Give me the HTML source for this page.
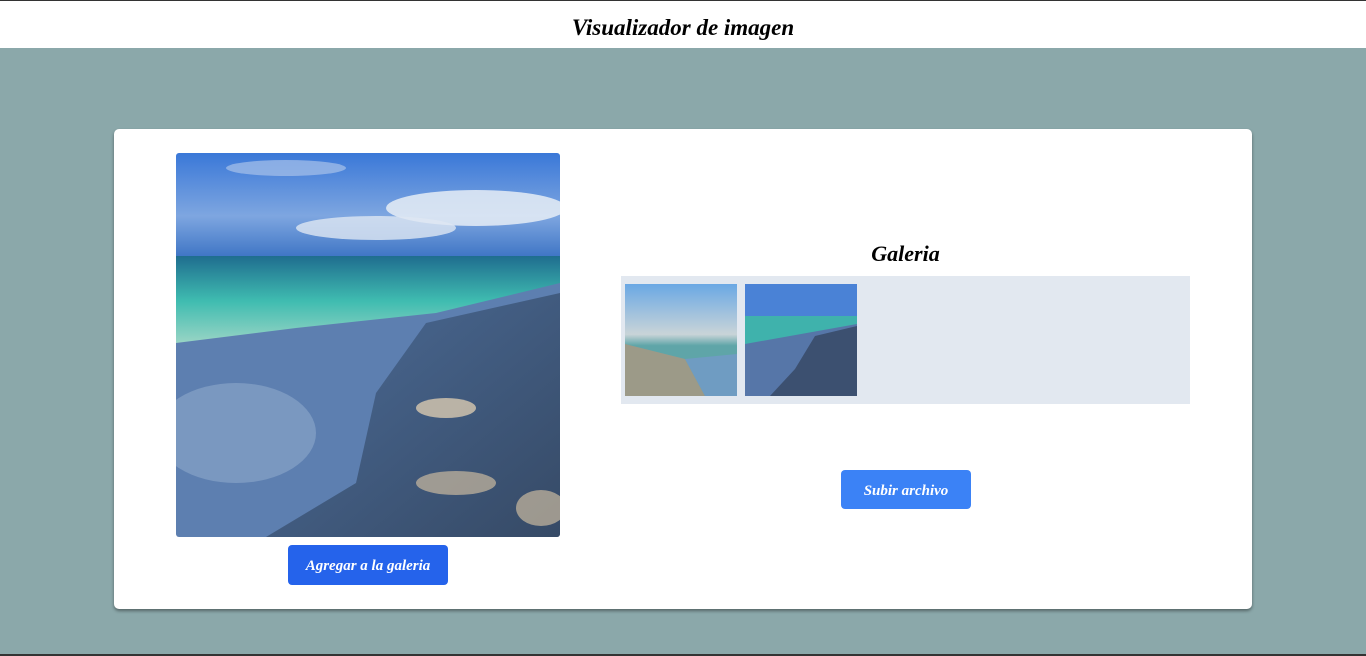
<!DOCTYPE html>
<html><head><meta charset="utf-8"><style>
*{margin:0;padding:0;box-sizing:border-box}
body{width:1366px;height:656px;background:#8ba8aa;font-family:"Liberation Serif",serif;position:relative;overflow:hidden;border-top:1px solid #333;border-bottom:2px solid #333}
.hdr{position:absolute;left:0;top:0;width:1366px;height:47px;background:#fff;text-align:center;font-size:23px;font-weight:bold;font-style:italic;line-height:54px}
.card{position:absolute;left:114px;top:128px;width:1138px;height:480px;background:#fff;border-radius:5px;box-shadow:0 2px 3px rgba(0,0,0,.4)}
.main{position:absolute;left:62px;top:24px;width:384px;height:384px;border-radius:3px;overflow:hidden}
.btn{position:absolute;color:#fff;font-weight:bold;font-style:italic;font-size:15px;text-align:center;border-radius:4px}
.gal{position:absolute;left:507px;top:147px;width:569px;height:128px;background:#e2e8f0}
.th{position:absolute;top:8px;width:112px;height:112px;overflow:hidden}
h2{position:absolute;left:507px;top:112px;width:569px;text-align:center;font-size:22px;font-style:italic;font-weight:bold}
</style></head><body>
<div class="hdr">Visualizador de imagen</div>
<div class="card">
<svg class="main" viewBox="0 0 384 384" preserveAspectRatio="none">
<defs>
<linearGradient id="sky" x1="0" y1="0" x2="0" y2="1"><stop offset="0" stop-color="#3a78d8"/><stop offset=".6" stop-color="#7ea6e0"/><stop offset="1" stop-color="#3d74c4"/></linearGradient>
<linearGradient id="sea" x1="0" y1="0" x2="0" y2="1"><stop offset="0" stop-color="#1f6d8f"/><stop offset=".5" stop-color="#3fbcb0"/><stop offset="1" stop-color="#9fd6c6"/></linearGradient>
<linearGradient id="sand" x1="0" y1="0" x2="1" y2="1"><stop offset="0" stop-color="#4c6c98"/><stop offset="1" stop-color="#364a66"/></linearGradient>
</defs>
<rect width="384" height="105" fill="url(#sky)"/>
<ellipse cx="300" cy="55" rx="90" ry="18" fill="#e6edf6" opacity=".85"/>
<ellipse cx="200" cy="75" rx="80" ry="12" fill="#dfe7f2" opacity=".8"/>
<ellipse cx="110" cy="15" rx="60" ry="8" fill="#a8c2ea" opacity=".7"/>
<rect y="103" width="384" height="90" fill="url(#sea)"/>
<polygon points="0,190 120,175 260,160 384,130 384,384 0,384" fill="#5d7fb0"/>
<polygon points="250,170 384,140 384,384 90,384 180,330 200,240" fill="url(#sand)"/>
<ellipse cx="270" cy="255" rx="30" ry="10" fill="#d8c9b0" opacity=".8"/>
<ellipse cx="280" cy="330" rx="40" ry="12" fill="#c9b9a0" opacity=".7"/>
<ellipse cx="365" cy="355" rx="25" ry="18" fill="#c9b9a0" opacity=".7"/>
<ellipse cx="60" cy="280" rx="80" ry="50" fill="#8ea8cc" opacity=".6"/>
</svg>
<div class="btn" style="left:174px;top:416px;width:160px;height:40px;line-height:42px;background:#2563eb">Agregar a la galeria</div>
<h2>Galeria</h2>
<div class="gal">
<svg class="th" style="left:4px" viewBox="0 0 112 112" preserveAspectRatio="none">
<defs><linearGradient id="s2" x1="0" y1="0" x2="0" y2="1"><stop offset="0" stop-color="#6aa8e4"/><stop offset=".45" stop-color="#c9d4d8"/><stop offset=".55" stop-color="#5fa5a8"/></linearGradient></defs>
<rect width="112" height="112" fill="url(#s2)"/>
<polygon points="0,60 60,75 80,112 0,112" fill="#9c9a88"/>
<polygon points="60,75 112,70 112,112 80,112" fill="#6f9cc2"/>
</svg>
<svg class="th" style="left:124px" viewBox="0 0 112 112" preserveAspectRatio="none">
<rect width="112" height="32" fill="#4a82d6"/><rect y="32" width="112" height="30" fill="#3fb2ac"/>
<polygon points="0,60 112,40 112,112 0,112" fill="#5676a8"/>
<polygon points="70,52 112,42 112,112 25,112 50,85" fill="#3c5070"/>
</svg>
</div>
<div class="btn" style="left:727px;top:341px;width:130px;height:39px;line-height:42px;background:#3b82f6">Subir archivo</div>
</div>
</body></html>
